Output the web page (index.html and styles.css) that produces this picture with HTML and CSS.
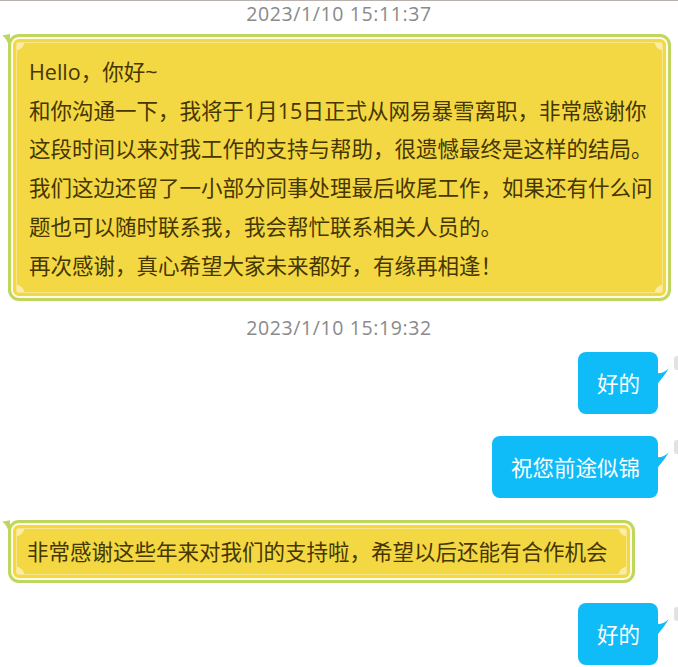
FILE: index.html
```html
<!DOCTYPE html>
<html lang="zh-CN">
<head>
<meta charset="utf-8">
<title>聊天记录</title>
<link rel="stylesheet" href="styles.css">
</head>
<body>
<div class="chat">
  <div class="time time-first">2023/1/10 15:11:37</div>
  <div class="row row-left">
    <div class="bubble-y bubble-long">
      Hello，你好~<br>
      和你沟通一下，我将于1月15日正式从网易暴雪离职，非常感谢你<br>
      这段时间以来对我工作的支持与帮助，很遗憾最终是这样的结局。<br>
      我们这边还留了一小部分同事处理最后收尾工作，如果还有什么问<br>
      题也可以随时联系我，我会帮忙联系相关人员的。<br>
      再次感谢，真心希望大家未来都好，有缘再相逢！
    </div>
  </div>
  <div class="time time-second">2023/1/10 15:19:32</div>
  <div class="row row-right">
    <div class="bubble-b">好的</div>
  </div>
  <div class="row row-right">
    <div class="bubble-b">祝您前途似锦</div>
  </div>
  <div class="row row-left">
    <div class="bubble-y bubble-short">非常感谢这些年来对我们的支持啦，希望以后还能有合作机会</div>
  </div>
  <div class="row row-right">
    <div class="bubble-b">好的</div>
  </div>
</div>
</body>
</html>
```
FILE: styles.css
```css
* { box-sizing: border-box; }
html, body {
  margin: 0;
  padding: 0;
  background: #ffffff;
  overflow: hidden;
}
body {
  font-family: "Open Sans", "Noto Sans CJK SC", sans-serif;
}
.chat {
  border-top: 1px solid #b8b0ad;
  display: flex;
  flex-direction: column;
}
.time {
  height: 26px;
  line-height: 26px;
  text-align: center;
  font-size: 19.5px;
  letter-spacing: 0.6px;
  color: #8a8a8a;
}
.time-first { margin-bottom: 7px; }
.time-second { margin-top: 14px; margin-bottom: 11px; }

.row { display: flex; }
.row-left { padding-left: 8px; justify-content: flex-start; }
.row-right { padding-right: 20px; justify-content: flex-end; margin-bottom: 22px; }

.bubble-y {
  position: relative;
  background-color: #f3d843;
  background-image:
    radial-gradient(circle at 4px 4px, rgba(255,255,255,0.55) 0 9px, transparent 10px),
    radial-gradient(circle at calc(100% - 4px) 4px, rgba(255,255,255,0.55) 0 9px, transparent 10px),
    radial-gradient(circle at 4px calc(100% - 4px), rgba(255,255,255,0.55) 0 9px, transparent 10px),
    radial-gradient(circle at calc(100% - 4px) calc(100% - 4px), rgba(255,255,255,0.55) 0 9px, transparent 10px);
  border: 3px solid #bfd65f;
  border-radius: 11px;
  box-shadow:
    inset 0 0 0 2px #fffbe6,
    inset 0 0 0 5px #f3d843,
    inset 0 0 0 6px #f8e68a;
  color: #463600;
  font-family: "Open Sans", "Noto Sans CJK SC", sans-serif;
  font-size: 21.5px;
  line-height: 38.7px;
  white-space: nowrap;
}
.bubble-y::before {
  content: "";
  position: absolute;
  left: -10px;
  top: -3px;
  width: 9px;
  height: 15px;
  background: #bfd65f;
  clip-path: path('M9 0 L1 1.5 Q6 4 9 15 Z');
}
.bubble-long {
  width: 663px;
  padding: 16px 14px 13px 18px;
}
.bubble-short {
  width: 627px;
  padding: 10px 14px 8px 16px;
  margin-bottom: 20px;
}

.bubble-b {
  position: relative;
  background: #0fbcf8;
  color: #ffffff;
  border-radius: 8px;
  height: 62px;
  line-height: 62px;
  padding: 1px 18px 0 19px;
  font-size: 21.5px;
  white-space: nowrap;
}
.bubble-b::after {
  content: "";
  position: absolute;
  right: -11px;
  top: 16px;
  width: 11px;
  height: 15px;
  background: #0fbcf8;
  clip-path: path('M0 5 Q6 5 11 0 Q6 8 0 15 Z');
}
.bubble-b::before {
  content: "";
  position: absolute;
  right: -20px;
  top: 4px;
  width: 4px;
  height: 14px;
  border-radius: 3px 0 0 3px;
  background: #e2e2e2;
}
```
